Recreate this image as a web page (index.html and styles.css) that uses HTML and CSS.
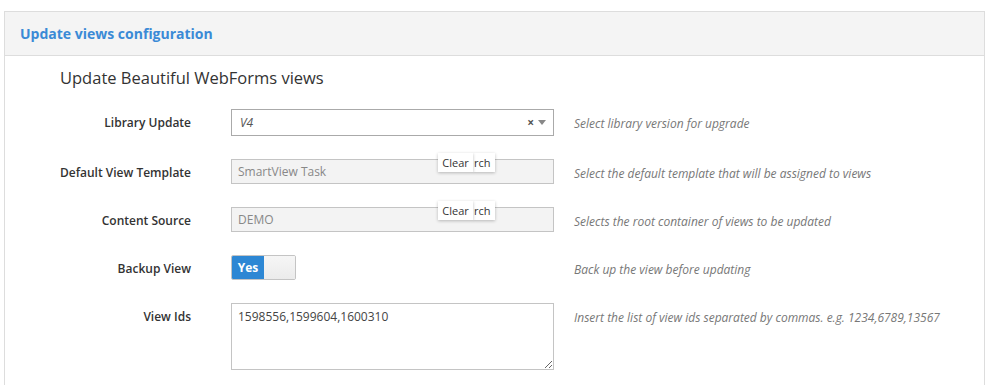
FILE: index.html
```html
<!DOCTYPE html>
<html lang="en">
  <head>
    <meta charset="UTF-8" />
    <title>Update views configuration</title>
    <link rel="stylesheet" href="styles.css">
  </head>
  <body>
    <div class="panel">
      <div class="panel-heading">Update views configuration</div>
      <div class="panel-body">
        <h3>Update Beautiful WebForms views</h3>

        <div class="form-grid">
          <label class="form-label">Library Update</label>
          <div class="control">
            <div class="select">
              <span class="select-value">V4</span>
              <span class="select-clear">×</span>
              <span class="select-arrow"></span>
            </div>
          </div>
          <div class="help">Select library version for upgrade</div>

          <label class="form-label">Default View Template</label>
          <div class="control">
            <input class="input" type="text" value="SmartView Task" disabled />
            <div class="popover">
              <span class="pop-btn pop-clear">Clear</span>
              <span class="pop-btn pop-search">rch</span>
            </div>
          </div>
          <div class="help">Select the default template that will be assigned to views</div>

          <label class="form-label">Content Source</label>
          <div class="control">
            <input class="input" type="text" value="DEMO" disabled />
            <div class="popover">
              <span class="pop-btn pop-clear">Clear</span>
              <span class="pop-btn pop-search">rch</span>
            </div>
          </div>
          <div class="help">Selects the root container of views to be updated</div>

          <label class="form-label">Backup View</label>
          <div class="control">
            <div class="switch">
              <span class="switch-on">Yes</span>
              <span class="switch-handle"></span>
            </div>
          </div>
          <div class="help">Back up the view before updating</div>

          <label class="form-label">View Ids</label>
          <div class="control">
            <textarea class="textarea">1598556,1599604,1600310</textarea>
          </div>
          <div class="help">Insert the list of view ids separated by commas. e.g. 1234,6789,13567</div>
        </div>
      </div>
    </div>
  </body>
</html>
```

FILE: styles.css
```css
body {
  margin: 0;
  padding: 11px 0 0 4px;
  font-family: "Open Sans", "Liberation Sans", sans-serif;
  font-size: 12px;
  color: #333;
  background: #fff;
}

.panel {
  border: 1px solid #ddd;
  border-bottom: none;
  min-height: 380px;
}

.panel-heading {
  background: #f4f4f4;
  border-bottom: 1px solid #ddd;
  height: 43px;
  line-height: 43px;
  padding-left: 15px;
  font-size: 14px;
  font-weight: 700;
  color: #3a8ad6;
}

.panel-body {
  padding-top: 10px;
}

h3 {
  margin: 0 0 19px 55px;
  font-size: 16.5px;
  font-weight: 500;
  line-height: 24px;
  color: #333;
}

.form-grid {
  display: grid;
  grid-template-columns: 226px 343px 1fr;
  row-gap: 23px;
  align-items: start;
}

.form-label {
  text-align: right;
  padding-right: 40px;
  padding-top: 5px;
  line-height: 17px;
  font-weight: 600;
  color: #333;
}

.control {
  position: relative;
  width: 323px;
}

.help {
  padding-top: 6px;
  line-height: 17px;
  font-style: italic;
  color: #777;
}

.select {
  box-sizing: border-box;
  height: 27px;
  border: 1px solid #aaa;
  display: flex;
  align-items: center;
  padding: 0 7px 0 8px;
  background: #fff;
}

.select-value {
  flex: 1;
  font-style: italic;
  color: #555;
}

.select-clear {
  font-size: 12px;
  font-weight: 700;
  color: #555;
  margin-right: 4px;
}

.select-arrow {
  width: 0;
  height: 0;
  border-left: 4px solid transparent;
  border-right: 4px solid transparent;
  border-top: 5px solid #888;
}

.input {
  box-sizing: border-box;
  width: 323px;
  height: 25px;
  border: 1px solid #c4c4c4;
  background: #f3f3f3;
  padding: 0 6px;
  font-family: inherit;
  font-size: 12px;
  color: #888;
  display: block;
}

.popover {
  position: absolute;
  left: 207px;
  top: -6px;
  display: flex;
  height: 19px;
}

.pop-btn {
  height: 19px;
  line-height: 19px;
  background: #fff;
  font-size: 11px;
  color: #333;
  box-shadow: 0 1px 3px rgba(0, 0, 0, 0.25);
}

.pop-clear {
  width: 35px;
  text-align: center;
  position: relative;
  z-index: 1;
}

.pop-search {
  width: 21px;
  padding-left: 1px;
}

.switch {
  box-sizing: border-box;
  width: 65px;
  height: 25px;
  border: 1px solid #c4c4c4;
  border-radius: 2px;
  display: flex;
  overflow: hidden;
}

.switch-on {
  width: 32px;
  background: #2d87d4;
  color: #fff;
  font-weight: 700;
  text-align: center;
  line-height: 23px;
}

.switch-handle {
  flex: 1;
  background: linear-gradient(#f6f6f6, #ebebeb);
}

.textarea {
  box-sizing: border-box;
  width: 323px;
  height: 67px;
  border: 1px solid #c4c4c4;
  padding: 4px 6px;
  font-family: inherit;
  font-size: 12px;
  color: #444;
  display: block;
  resize: vertical;
}
```
